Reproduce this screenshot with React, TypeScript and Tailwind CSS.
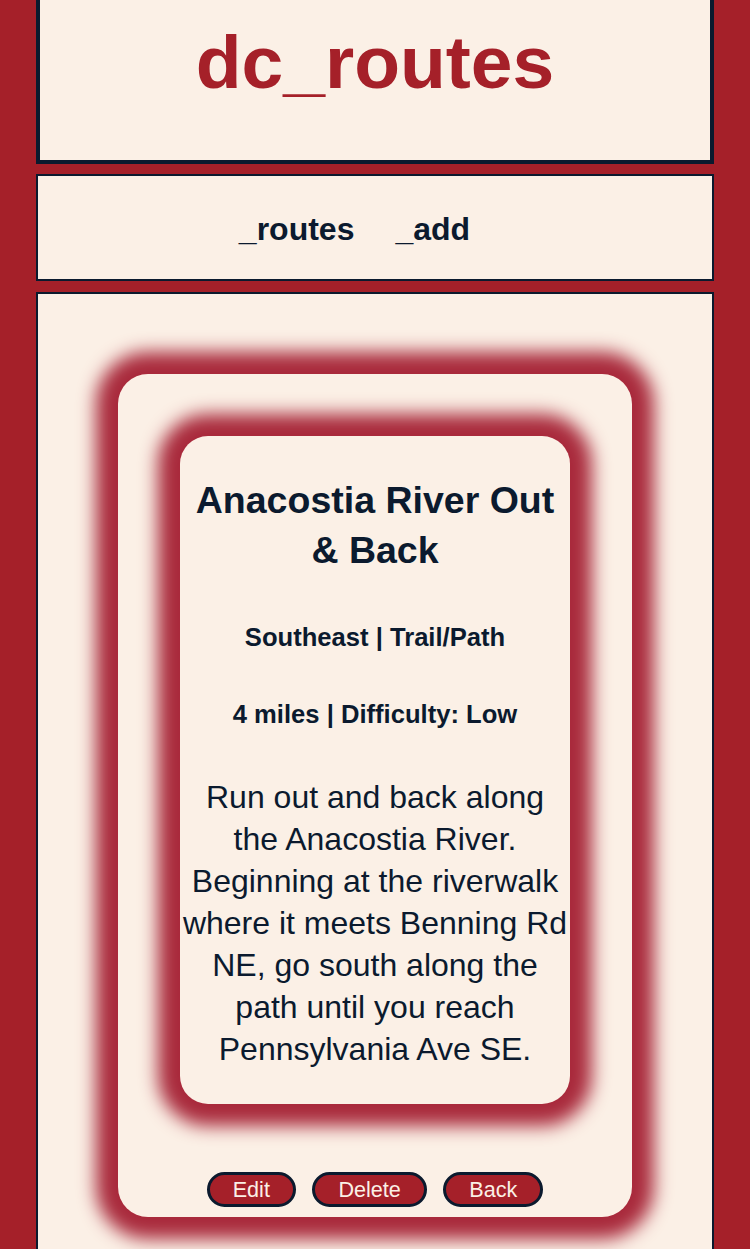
import React from "react";

const route = {
  name: "Anacostia River Out & Back",
  area: "Southeast",
  kind: "Trail/Path",
  miles: 4,
  difficulty: "Low",
  description:
    "Run out and back along the Anacostia River. Beginning at the riverwalk where it meets Benning Rd NE, go south along the path until you reach Pennsylvania Ave SE.",
};

const NavLink = ({ label }: { label: string }) => (
  <a href="#" className="mr-[41px] text-[32px] font-bold text-[#0b1a2e] no-underline">
    {label}
  </a>
);

const RouteButton = ({ label }: { label: string }) => (
  <button className="flex h-[35px] items-center rounded-full border-[3px] border-[#0b1a2e] bg-[#a52029] px-[23px] text-[21.6px] leading-none text-[#fbf0e6]">
    {label}
  </button>
);

export default function App() {
  return (
    <div className="min-h-screen bg-[#a52029] px-[36px] font-['Liberation_Sans',Arial,sans-serif] text-[#0b1a2e]">
      {/* header */}
      <header className="mb-[10px] box-border h-[164px] border-[4px] border-t-0 border-[#0b1a2e] bg-[#fbf0e6] pt-[25px] text-center">
        <h1 className="text-[75px] font-bold leading-none text-[#a52029]">dc_routes</h1>
      </header>

      {/* nav */}
      <nav className="mb-[11px] box-border flex h-[107px] items-center justify-center border-2 border-[#0b1a2e] bg-[#fbf0e6] pt-[3px]">
        <NavLink label="_routes" />
        <NavLink label="_add" />
      </nav>

      {/* route detail */}
      <main className="border-2 border-[#0b1a2e] bg-[#fbf0e6] p-[80px]">
        <div className="flex flex-col items-center rounded-[30px] bg-[#fbf0e6] px-[62px] pt-[62px] pb-[10px] shadow-[0_0_18px_22px_#a92a3c]">
          <div className="w-full rounded-[28px] bg-[#fbf0e6] px-[2px] pt-[39px] pb-[34px] text-center shadow-[0_0_18px_22px_#a92a3c]">
            <h2 className="text-[37.5px] font-bold leading-[50px]">{route.name}</h2>
            <p className="mt-[47px] text-[25.6px] font-bold leading-[31px]">
              {route.area} | {route.kind}
            </p>
            <p className="mt-[46px] text-[25.6px] font-bold leading-[31px]">
              {route.miles} miles | Difficulty: {route.difficulty}
            </p>
            <p className="mt-[46px] text-[32px] leading-[42px]">{route.description}</p>
          </div>

          <div className="mt-[68px] flex gap-[16.5px]">
            <RouteButton label="Edit" />
            <RouteButton label="Delete" />
            <RouteButton label="Back" />
          </div>
        </div>
      </main>
    </div>
  );
}
